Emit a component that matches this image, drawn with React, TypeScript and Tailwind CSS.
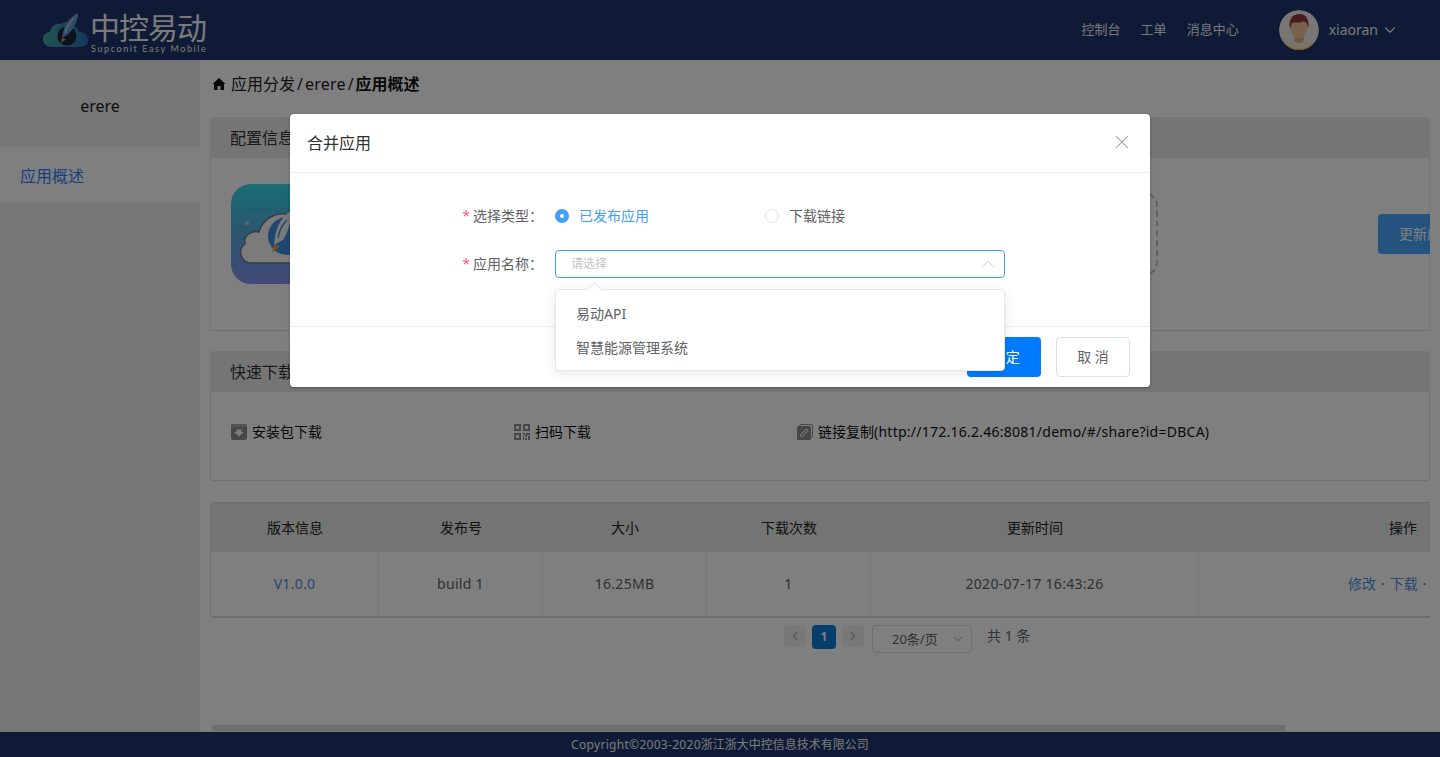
import { useState } from "react";
import { ChevronDown, ChevronLeft, ChevronRight, ChevronUp, X } from "lucide-react";

const font = "font-['Noto_Sans','Noto_Sans_CJK_SC',sans-serif]";

function CloudLogo() {
  return (
    <svg width="46" height="36" viewBox="0 0 46 36" className="shrink-0">
      <defs>
        <linearGradient id="cloudFill" x1="0" y1="0" x2="1" y2="0">
          <stop offset="0" stopColor="#45a89c" />
          <stop offset="1" stopColor="#2a6fb8" />
        </linearGradient>
      </defs>
      <path
        d="M9 35 C3 35 0 31 0 27 C0 23 3 20 7 20 C8 14 13 11 18 12 C21 9 27 10 30 13 C34 15 36 18 36 20 C41 20 45 23 45 28 C45 32 42 35 37 35 Z"
        fill="url(#cloudFill)"
      />
      <circle cx="24" cy="24" r="9.5" fill="#16233f" />
      <path d="M35 1 C28 4 22 11 20 20 L19 26 L24 23 C30 18 35 10 35 1 Z" fill="#5f97cc" />
      <path d="M31 6 C27 10 24 15 22 21" stroke="#e4ecf4" strokeWidth="1" fill="none" />
      <path d="M19 26 L18 31 L23 27 Z" fill="#e09a2b" />
    </svg>
  );
}

function Avatar() {
  return (
    <svg width="40" height="40" viewBox="0 0 40 40" className="rounded-full shrink-0">
      <circle cx="20" cy="20" r="20" fill="#f0ede8" />
      <path d="M8 35 C11 32 14 31 16 30 H24 C26 31 29 32 32 35 L28 40 H12 Z" fill="#f7e6cc" />
      <path d="M7 34 C13 41 27 41 33 34 L36 37 C28 43 12 43 4 37 Z" fill="#f2a81d" />
      <path d="M15 30 C17 34 23 34 25 30 L24 24 H16 Z" fill="#e3b189" />
      <ellipse cx="20" cy="18" rx="8" ry="10.5" fill="#f2c49a" />
      <path d="M11 19 C9 9 14 4 20 4 C27 3 31 10 29 19 L28 14 C27 12 25 11 23 12 C20 13 15 12 13 13 Z" fill="#8a3a38" />
    </svg>
  );
}

function AppIcon() {
  return (
    <svg width="100" height="100" viewBox="0 0 100 100" className="rounded-[20px] shrink-0">
      <defs>
        <linearGradient id="iconFill" x1="0" y1="0" x2="0" y2="1">
          <stop offset="0" stopColor="#37dce8" />
          <stop offset="0.5" stopColor="#4aa2dc" />
          <stop offset="1" stopColor="#7c8cf2" />
        </linearGradient>
      </defs>
      <rect width="100" height="100" fill="url(#iconFill)" />
      <path d="M0 36 C20 24 50 26 100 40 V100 H0 Z" fill="#ffffff" opacity="0.08" />
      <circle cx="16" cy="39" r="2" fill="#9fdcf0" />
      <path
        d="M20 79 C10 79 6 66 14 60 C12 52 20 46 28 48 C32 34 46 27 58 31 L75 79 Z"
        fill="#f6f6f6"
        stroke="#6c7a8a"
        strokeWidth="1.5"
      />
      <circle cx="56" cy="52" r="19" fill="#3f8fe0" />
      <path d="M60 27 C50 33 44 44 43 61 L52 56 C57 48 60 38 60 27 Z" fill="#f4f4f4" />
      <path d="M56 36 C51 41 48 47 47 54" stroke="#3f8fe0" strokeWidth="1.5" fill="none" />
      <path d="M43 61 L41 69 L49 62 Z" fill="#eda93a" />
    </svg>
  );
}

function DownloadIcon() {
  return (
    <svg width="16" height="16" viewBox="0 0 16 16" className="shrink-0">
      <rect width="16" height="16" rx="2" fill="#8e8e8e" />
      <rect x="0" y="0" width="16" height="3" rx="1" fill="#a6a6a6" />
      <path d="M5.5 5.5 H10.5 V8 H13 L8 12.5 L3 8 H5.5 Z" fill="#f4f4f4" />
    </svg>
  );
}

function QrIcon() {
  return (
    <svg width="16" height="16" viewBox="0 0 16 16" className="shrink-0" fill="#8e8e8e">
      <path fillRule="evenodd" d="M0 0 H7 V7 H0 Z M2 2 V5 H5 V2 Z" />
      <path fillRule="evenodd" d="M9 0 H16 V7 H9 Z M11 2 V5 H14 V2 Z" />
      <path fillRule="evenodd" d="M0 9 H7 V16 H0 Z M2 11 V14 H5 V11 Z" />
      <path d="M9 9 H11 V11 H9 Z M12 9 H16 V11 H12 Z M11 11 H13 V13 H11 Z M14 12 H16 V16 H14 Z M9 12 H10 V16 H9 Z M11 14 H13 V16 H11 Z" />
    </svg>
  );
}

function LinkIcon() {
  return (
    <svg width="16" height="16" viewBox="0 0 16 16" className="shrink-0">
      <rect x="2.5" y="0.5" width="13" height="13" rx="1.5" fill="none" stroke="#8e8e8e" strokeWidth="1" />
      <rect x="0" y="2" width="14" height="14" rx="1.5" fill="#8e8e8e" />
      <path d="M4.5 11.5 L9.5 6.5" stroke="#f4f4f4" strokeWidth="3.4" strokeLinecap="round" />
      <path d="M4.5 11.5 L9.5 6.5" stroke="#8e8e8e" strokeWidth="1.4" strokeLinecap="round" />
    </svg>
  );
}

function HomeIcon() {
  return (
    <svg width="14" height="14" viewBox="0 0 14 14" className="shrink-0" fill="#111111">
      <path d="M7 1 L13.5 7 L12 7 V13 H8.5 V9 H5.5 V13 H2 V7 H0.5 Z" />
    </svg>
  );
}

function CardTitle({ title }: { title: string }) {
  return <div className="h-[41px] bg-[#ebebeb] pl-5 flex items-center text-base text-[#333] rounded-t">{title}</div>;
}

const columns = [
  { title: "版本信息", value: "V1.0.0", w: "w-[168px]" },
  { title: "发布号", value: "build 1", w: "w-[164px]" },
  { title: "大小", value: "16.25MB", w: "w-[164px]" },
  { title: "下载次数", value: "1", w: "w-[164px]" },
  { title: "更新时间", value: "2020-07-17 16:43:26", w: "w-[328px]" },
];

function VersionTable() {
  return (
    <div className="mt-[21px] mr-[10px] h-[116px] border-y border-l border-[#d9d9d9] rounded-l overflow-hidden text-sm shrink-0">
      <div className="flex h-[49px] bg-[#e8e8e8] text-[#222]">
        {columns.map((c) => (
          <div key={c.title} className={`${c.w} shrink-0 flex items-center justify-center`}>
            {c.title}
          </div>
        ))}
        <div className="pl-[190px] flex items-center whitespace-nowrap">操作</div>
      </div>
      <div className="flex h-[65px] border-b border-[#ddd] text-[#606266]">
        {columns.map((c, i) => (
          <div
            key={c.title}
            className={`${c.w} shrink-0 flex items-center justify-center border-r border-[#ebebeb] tracking-[0.3px] ${i === 0 ? "text-[#4a8fe0]" : ""}`}
          >
            {c.value}
          </div>
        ))}
        <div className="pl-[149px] flex items-center whitespace-nowrap text-[#4a8fe0]">
          修改<span className="text-[#606266] px-[5px]">·</span>下载<span className="text-[#606266] px-[5px]">·</span>
        </div>
      </div>
    </div>
  );
}

function Pagination() {
  return (
    <div className="mt-[7px] ml-[574px] flex items-start text-sm text-[#606266]">
      <div className="w-[22px] h-[22px] bg-[#f0f0f0] rounded-sm flex items-center justify-center text-[#b4b4b4]">
        <ChevronLeft size={14} strokeWidth={2.5} />
      </div>
      <div className="ml-[6px] w-[24px] h-[24px] bg-[#0a7cd6] rounded-sm flex items-center justify-center text-white text-xs font-bold">
        1
      </div>
      <div className="ml-[6px] w-[22px] h-[22px] bg-[#f0f0f0] rounded-sm flex items-center justify-center text-[#b4b4b4]">
        <ChevronRight size={14} strokeWidth={2.5} />
      </div>
      <div className="ml-[8px] w-[100px] h-[28px] border border-[#dcdfe6] rounded flex items-center pl-[19px] pr-[6px] justify-between text-[13px]">
        <span>20条/页</span>
        <ChevronDown size={14} className="text-[#c0c4cc]" />
      </div>
      <div className="ml-[15px] leading-[22px] whitespace-pre">共 1 条</div>
    </div>
  );
}

function Page() {
  return (
    <div className="h-screen flex flex-col bg-white overflow-hidden">
      <header className="h-[60px] bg-[#1e366c] flex items-center shrink-0 text-white">
        <div className="ml-[43px] flex items-center h-full">
          <CloudLogo />
          <div className="ml-[1px] mt-[3px] flex flex-col">
            <span className="text-[30px] leading-[33px] tracking-[-1px] text-[#f4f4f4]">中控易动</span>
            <span className="ml-[1px] text-[9px] leading-[9px] tracking-[1.6px] text-[#f4f4f4] font-['Lato',sans-serif]">
              Supconit Easy Mobile
            </span>
          </div>
        </div>
        <nav className="ml-auto flex items-center text-[13px] text-[#eeeeee]">
          <span>控制台</span>
          <span className="ml-5">工单</span>
          <span className="ml-5">消息中心</span>
        </nav>
        <div className="ml-10 mr-[41px] flex items-center">
          <Avatar />
          <span className="ml-[10px] text-sm text-[#eeeeee]">xiaoran</span>
          <ChevronDown size={18} strokeWidth={1.5} className="ml-[3px] text-[#eeeeee]" />
        </div>
      </header>
      <div className="flex-1 min-h-0 flex">
        <aside className="w-[200px] shrink-0 bg-[#eeeeee] text-base">
          <div className="h-[87px] flex items-center justify-center pt-[5px] text-[#222]">erere</div>
          <div className="h-[56px] bg-white text-[#2b7fff] pl-5 pt-[1px] flex items-center">应用概述</div>
        </aside>
        <main className="flex-1 min-w-0 pl-[10px] flex flex-col relative overflow-hidden">
          <div className="h-[57px] flex items-center pb-[9px] pl-[2px] gap-[5px] text-base text-[#222] shrink-0">
            <HomeIcon />
            <span className="whitespace-pre">
              应用分发<span className="px-[2px]">/</span>
              <span className="tracking-[0.2px]">erere</span>
              <span className="px-[2px]">/</span>
              <b className="text-[#111]">应用概述</b>
            </span>
          </div>
          <section className="mr-[10px] h-[214px] border-b border-[#dcdcdc] shrink-0 overflow-hidden">
            <CardTitle title="配置信息" />
            <div className="h-[172px] border-x border-[#ebebeb] flex pl-5 pt-[26px]">
              <AppIcon />
              <div className="ml-[727px] w-[100px] h-[82px] mt-[9px] border-2 border-dashed border-[#c4c4c4] rounded-xl shrink-0" />
              <div className="ml-[220px] w-[100px] h-[40px] mt-[30px] bg-[#49a6ff] text-white rounded text-sm flex items-center pl-[21px] whitespace-nowrap shrink-0">
                更新应用
              </div>
            </div>
          </section>
          <section className="mt-[20px] mr-[10px] h-[130px] border-b border-[#e2e2e2] rounded-b shrink-0">
            <CardTitle title="快速下载" />
            <div className="flex h-[88px] border-x border-[#e2e2e2] pl-5 pt-[30px] text-sm text-[#111]">
              <div className="w-[283px] h-5 flex items-center gap-[5px]">
                <DownloadIcon />
                安装包下载
              </div>
              <div className="w-[283px] h-5 flex items-center gap-[5px]">
                <QrIcon />
                扫码下载
              </div>
              <div className="h-5 flex items-center gap-[5px] whitespace-nowrap">
                <LinkIcon />
                <span>
                  链接复制<span className="tracking-[0.25px]">(http://172.16.2.46:8081/demo/#/share?id=DBCA)</span>
                </span>
              </div>
            </div>
          </section>
          <VersionTable />
          <Pagination />
          <div className="absolute left-[12px] bottom-0 w-[1074px] h-[6px] rounded-full bg-[#dcdcdc]" />
        </main>
      </div>
      <footer className="h-[26px] border-t border-[#eeeeee] bg-[#1e366c] text-[#f4f4f4] text-xs flex items-center justify-center shrink-0">
        <span className="tracking-[0.3px]">Copyright©2003-2020</span>浙江浙大中控信息技术有限公司
      </footer>
    </div>
  );
}

function MergeDialog() {
  const [kind, setKind] = useState("published");
  const published = kind === "published";

  return (
    <div className="absolute left-[290px] top-[114px] w-[860px] bg-white rounded-sm shadow-[0_1px_3px_rgba(0,0,0,0.3)]">
      <div className="h-[59px] border-b border-[#ebeef5] flex items-center justify-between pl-[17px] pr-[17px]">
        <span className="text-base text-[#303133]">合并应用</span>
        <X size={22} strokeWidth={1.1} className="text-[#909399] -mt-[3px]" />
      </div>
      <div className="h-[153px] relative text-sm text-[#606266]">
        <div className="flex items-center pt-[33px] h-[53px]">
          <label className="w-[253px] text-right whitespace-nowrap">
            <span className="text-[#f56c6c] mr-[3px]">*</span>选择类型：
          </label>
          <button
            className={`ml-[12px] flex items-center gap-[10px] ${published ? "text-[#409eff]" : ""}`}
            onClick={() => setKind("published")}
          >
            <span className="w-[14px] h-[14px] rounded-full bg-[#409eff] flex items-center justify-center">
              <span className="w-[4px] h-[4px] rounded-full bg-white" />
            </span>
            已发布应用
          </button>
          <button
            className={`ml-[116px] flex items-center gap-[10px] ${published ? "" : "text-[#409eff]"}`}
            onClick={() => setKind("link")}
          >
            <span className="w-[14px] h-[14px] rounded-full border border-[#dcdfe6]" />
            下载链接
          </button>
        </div>
        <div className="flex items-center mt-[24px]">
          <label className="w-[253px] text-right whitespace-nowrap">
            <span className="text-[#f56c6c] mr-[3px]">*</span>应用名称：
          </label>
          <div className="ml-[12px] w-[450px] h-[28px] border border-[#409eff] rounded flex items-center justify-between pl-[15px] pr-[6px]">
            <span className="text-[#c0c4cc] text-xs">请选择</span>
            <ChevronUp size={20} strokeWidth={1} className="text-[#b4b8c0]" />
          </div>
        </div>
        <div className="absolute left-[265px] top-[116px] w-[450px] h-[82px] bg-white border border-[#e4e7ed] rounded shadow-[0_2px_12px_rgba(0,0,0,0.1)] py-[7px] z-10">
          <div className="absolute left-[33px] -top-[6px] w-[10px] h-[10px] rotate-45 bg-white border-l border-t border-[#e4e7ed]" />
          <div className="h-[34px] pl-5 flex items-center relative">易动API</div>
          <div className="h-[34px] pl-5 flex items-center relative">智慧能源管理系统</div>
        </div>
      </div>
      <div className="h-[61px] border-t border-[#ebeef5] flex items-center justify-end pr-[20px] text-sm">
        <button className="w-[74px] h-[40px] bg-[#007bff] text-white rounded">确 定</button>
        <button className="ml-[15px] w-[74px] h-[40px] border border-[#dcdfe6] text-[#606266] rounded">取 消</button>
      </div>
    </div>
  );
}

export default function App() {
  return (
    <div className={`relative h-screen overflow-hidden ${font}`}>
      <Page />
      <div className="absolute inset-0 bg-black/50" />
      <MergeDialog />
    </div>
  );
}
